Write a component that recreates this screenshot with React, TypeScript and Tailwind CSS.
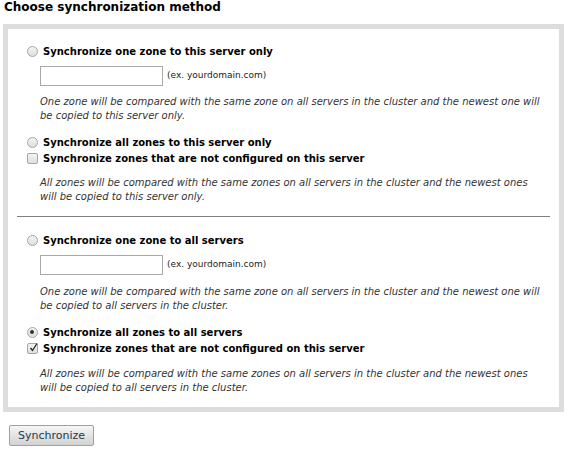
import React from "react";

function Radio({ checked }: { checked?: boolean }) {
  return (
    <span className="relative inline-flex h-[11px] w-[11px] shrink-0 items-center justify-center rounded-full border border-[#a6a6a6] bg-gradient-to-b from-[#f4f4f4] to-[#dedede]">
      {checked && <span className="h-[4px] w-[4px] rounded-full bg-[#333]" />}
    </span>
  );
}

function Check({ checked }: { checked?: boolean }) {
  return (
    <span className="relative inline-flex h-[11px] w-[11px] shrink-0 items-center justify-center rounded-[2px] border border-[#a6a6a6] bg-gradient-to-b from-[#f4f4f4] to-[#dedede]">
      {checked && (
        <svg width="11" height="11" viewBox="0 0 11 11" className="absolute left-[0px] top-[-2px]">
          <path d="M2.5 6 L4.5 8.5 L9 1.5" fill="none" stroke="#222" strokeWidth="1.3" />
        </svg>
      )}
    </span>
  );
}

function Option({ label, checked, box }: { label: string; checked?: boolean; box?: boolean }) {
  return (
    <div className="flex h-[16px] items-center">
      <span className="ml-[18px] mr-[5px] flex w-[12px] justify-center">
        {box ? <Check checked={checked} /> : <Radio checked={checked} />}
      </span>
      <span className="text-[10px] font-bold text-black">{label}</span>
    </div>
  );
}

function ZoneInput() {
  return (
    <div className="ml-[32px] mt-[7px] flex items-center">
      <span className="h-[20px] w-[123px] border border-[#a9a9a9] bg-white" />
      <span className="ml-[4px] text-[9px] text-[#222]">(ex. yourdomain.com)</span>
    </div>
  );
}

function Note({ children }: { children: React.ReactNode }) {
  return (
    <p className="ml-[32px] mr-[12px] text-[10px] italic leading-[14px] text-[#333]">{children}</p>
  );
}

export default function App() {
  return (
    <div className="h-[456px] w-[576px] bg-white font-['Verdana','DejaVu_Sans',sans-serif] text-[10px] text-black">
      <h2 className="pl-[4px] text-[12px] font-bold leading-[14px]">Choose synchronization method</h2>
      <div className="ml-[3px] mt-[10px] w-[561px] border-[5px] border-[#dddddd] bg-white pb-[12px] pt-[14px]">
        <Option label="Synchronize one zone to this server only" />
        <ZoneInput />
        <div className="mt-[9px]">
          <Note>
            One zone will be compared with the same zone on all servers in the cluster and the newest one will be copied to this server only.
          </Note>
        </div>
        <div className="mt-[11px]">
          <Option label="Synchronize all zones to this server only" />
          <Option label="Synchronize zones that are not configured on this server" box />
        </div>
        <div className="mt-[10px]">
          <Note>
            All zones will be compared with the same zones on all servers in the cluster and the newest ones will be copied to this server only.
          </Note>
        </div>
        <div className="mx-[9px] mt-[12px] h-px bg-[#808080]" />
        <div className="mt-[15px]">
          <Option label="Synchronize one zone to all servers" />
        </div>
        <ZoneInput />
        <div className="mt-[10px]">
          <Note>
            One zone will be compared with the same zone on all servers in the cluster and the newest one will be copied to all servers in the cluster.
          </Note>
        </div>
        <div className="mt-[11px]">
          <Option label="Synchronize all zones to all servers" checked />
          <Option label="Synchronize zones that are not configured on this server" checked box />
        </div>
        <div className="mt-[11px]">
          <Note>
            All zones will be compared with the same zones on all servers in the cluster and the newest ones will be copied to all servers in the cluster.
          </Note>
        </div>
      </div>
      <button className="ml-[9px] mt-[13px] h-[21px] w-[85px] rounded-[2px] border border-[#a0a0a0] bg-gradient-to-b from-[#f6f6f6] to-[#d2d2d2] text-[11px] leading-[19px] text-[#1d3b4e]">
        Synchronize
      </button>
    </div>
  );
}
